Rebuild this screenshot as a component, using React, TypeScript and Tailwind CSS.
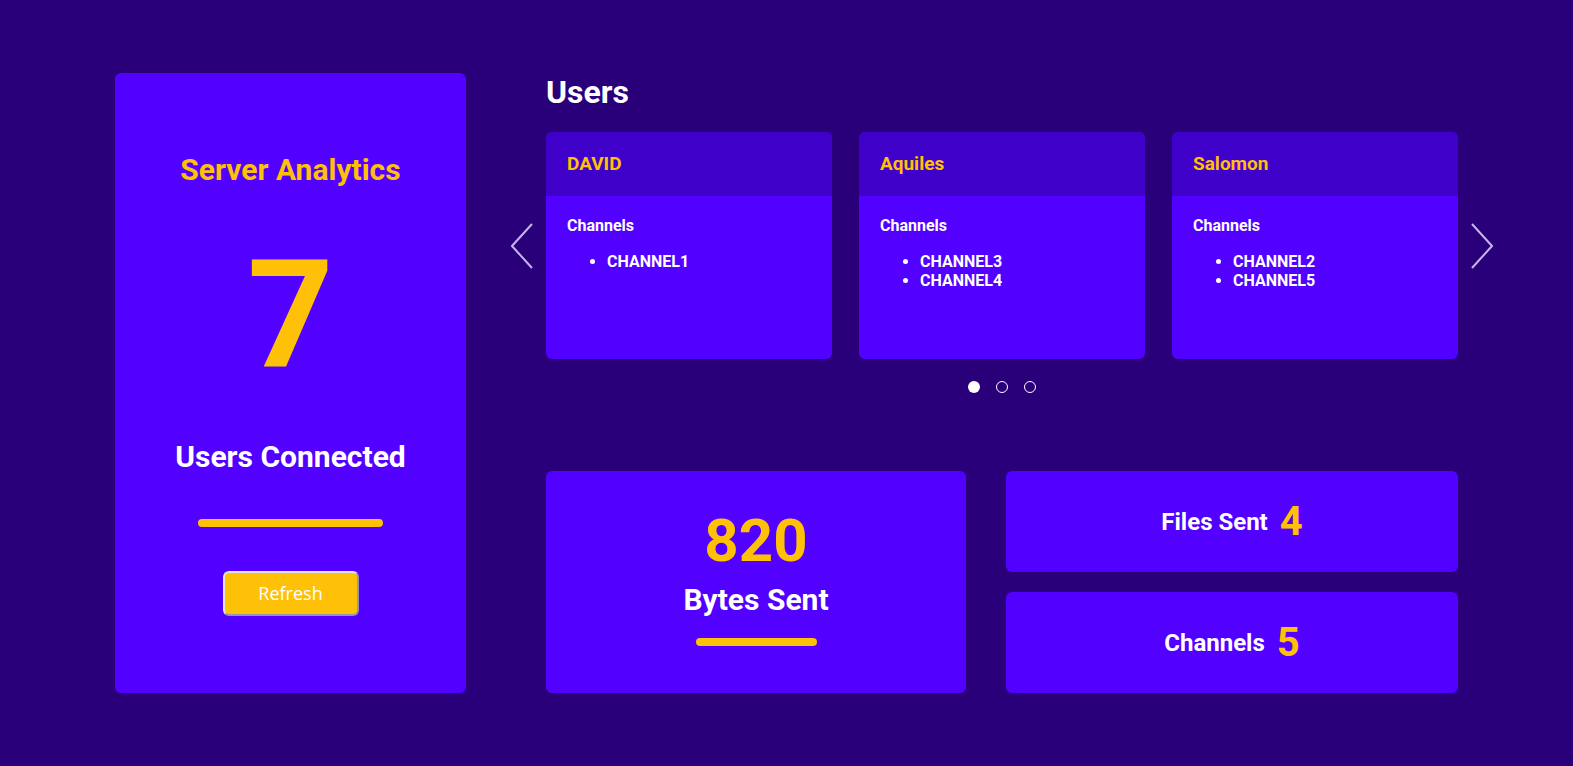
type User = { name: string; channels: string[] };

const users: User[] = [
  { name: 'DAVID', channels: ['CHANNEL1'] },
  { name: 'Aquiles', channels: ['CHANNEL3', 'CHANNEL4'] },
  { name: 'Salomon', channels: ['CHANNEL2', 'CHANNEL5'] },
];

function Chevron({ dir }: { dir: 'left' | 'right' }) {
  return (
    <svg width="22" height="46" viewBox="0 0 22 46" fill="none">
      <polyline
        points={dir === 'left' ? '21,1 1,23 21,45' : '1,1 21,23 1,45'}
        stroke="currentColor"
        strokeWidth="2"
      />
    </svg>
  );
}

function UserCard({ user }: { user: User }) {
  return (
    <div className="h-[227px] w-[286px] overflow-hidden rounded-md bg-[#5200ff]">
      <div className="flex h-16 items-center bg-[#3f00c9] px-[21px]">
        <span className="text-[19px] font-bold text-[#ffc107]">{user.name}</span>
      </div>
      <div className="px-[21px] pt-5 text-white">
        <div className="text-[16px] leading-[19px] font-bold">Channels</div>
        <ul className="mt-[17px] list-disc pl-10 text-[16px] leading-[19px] font-bold">
          {user.channels.map((c) => (
            <li key={c}>{c}</li>
          ))}
        </ul>
      </div>
    </div>
  );
}

function StatCard({ label, value }: { label: string; value: number }) {
  return (
    <div className="flex h-[101px] items-center justify-center gap-3 rounded-md bg-[#5200ff]">
      <span className="text-[24px] font-bold text-white">{label}</span>
      <span className="text-[40px] leading-none font-bold text-[#ffc107]">{value}</span>
    </div>
  );
}

export default function App() {
  return (
    <div
      className="min-h-screen bg-[#2a007a] pt-[73px]"
      style={{ fontFamily: 'Roboto, "Noto Sans", sans-serif' }}
    >
      <div className="mx-auto flex w-[1343px] gap-20">
        {/* left summary panel */}
        <div className="flex h-[620px] w-[351px] flex-col items-center rounded-md bg-[#5200ff] pt-[79px]">
          <div className="text-[30px] leading-[36px] font-bold text-[#ffc107]">Server Analytics</div>
          <div className="mt-[52px] text-[150px] leading-none font-bold text-[#ffc107]">7</div>
          <div className="mt-[49px] text-[30px] leading-[36px] font-bold text-white">Users Connected</div>
          <div className="mt-[44px] h-2 w-[185px] rounded-sm bg-[#ffc107]" />
          <button
            className="mt-[44px] h-[45px] w-[136px] rounded-md border-2 border-t-[#e4e0ee] border-r-[#9a93ac] border-b-[#9a93ac] border-l-[#e4e0ee] bg-[#ffc107] text-[18px] text-white"
            style={{ fontFamily: '"Open Sans", sans-serif' }}
          >
            Refresh
          </button>
        </div>

        {/* right column */}
        <div className="w-[912px]">
          <h2 className="mb-[21px] text-[32px] leading-[38px] font-bold text-white">Users</h2>

          <div className="relative">
            <button className="absolute top-[91px] -left-[35px] text-[#c4b5ec]">
              <Chevron dir="left" />
            </button>
            <div className="flex gap-[27px]">
              {users.map((u) => (
                <UserCard key={u.name} user={u} />
              ))}
            </div>
            <button className="absolute top-[91px] -right-[35px] text-[#c4b5ec]">
              <Chevron dir="right" />
            </button>
          </div>

          <div className="mt-[22px] flex justify-center gap-4">
            <span className="h-3 w-3 rounded-full bg-white" />
            <span className="h-3 w-3 rounded-full border-[1.5px] border-white" />
            <span className="h-3 w-3 rounded-full border-[1.5px] border-white" />
          </div>

          <div className="mt-[78px] flex gap-10">
            <div className="flex h-[222px] w-[420px] flex-col items-center rounded-md bg-[#5200ff] pt-10">
              <div className="text-[60px] leading-none font-bold text-[#ffc107]">820</div>
              <div className="mt-[11px] text-[30px] leading-[36px] font-bold text-white">Bytes Sent</div>
              <div className="mt-5 h-2 w-[121px] rounded-sm bg-[#ffc107]" />
            </div>
            <div className="flex w-[452px] flex-col gap-5">
              <StatCard label="Files Sent" value={4} />
              <StatCard label="Channels" value={5} />
            </div>
          </div>
        </div>
      </div>
    </div>
  );
}
